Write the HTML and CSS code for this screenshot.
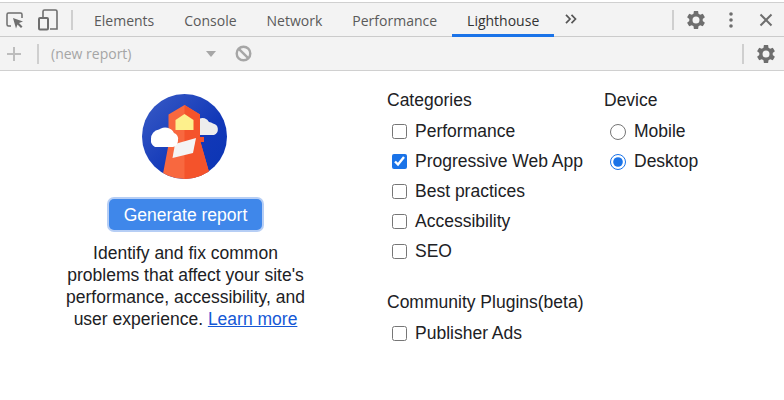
FILE: index.html
```html
<!DOCTYPE html>
<html lang="en">
<head>
    <meta charset="UTF-8">
    <title>Lighthouse - DevTools</title>
    <link rel="stylesheet" href="styles.css">
</head>
<body>
    <div class="tabbar">
        <button class="tool-btn inspect-btn" aria-label="Inspect">
            <svg width="20" height="20" viewBox="0 0 20 20"><path d="M6 16H3.500a1.500 1.500 0 0 1-1.500-1.500V4.500A1.500 1.500 0 0 1 3.500 3h12A1.500 1.500 0 0 1 17 4.500V8" fill="none" stroke="#6e6e6e" stroke-width="1.500"/><path d="M8 8l10 3.500-4 1.500 3.500 3.500-1.500 1.500-3.500-3.500-1.500 4z" fill="#6e6e6e"/></svg>
        </button>
        <button class="tool-btn device-btn" aria-label="Device">
            <svg width="20" height="22" viewBox="0 0 20 22"><path d="M5 8V2.500A1.500 1.500 0 0 1 6.500 1h11A1.500 1.500 0 0 1 19 2.500V20h-7" fill="none" stroke="#6e6e6e" stroke-width="1.600"/><rect x="1" y="9" width="9" height="11.500" rx="1" fill="none" stroke="#6e6e6e" stroke-width="2"/></svg>
        </button>
        <span class="divider tab-divider"></span>
        <nav class="tabs">
            <a class="tab">Elements</a>
            <a class="tab">Console</a>
            <a class="tab">Network</a>
            <a class="tab">Performance</a>
            <a class="tab active">Lighthouse</a>
        </nav>
        <svg class="more-tabs" width="12" height="10" viewBox="0 0 12 10"><path d="M1 .8L5 5 1 9.200M6.500 .8L10.500 5l-4 4.200" fill="none" stroke="#555" stroke-width="1.700"/></svg>
        <span class="spacer"></span>
        <span class="divider"></span>
        <svg class="gear" width="24" height="24" viewBox="0 0 24 24"><use href="#gear-icon"/></svg>
        <svg class="dots" width="4" height="18" viewBox="0 0 4 18"><circle cx="2" cy="3" r="1.800"/><circle cx="2" cy="9" r="1.800"/><circle cx="2" cy="15" r="1.800"/></svg>
        <svg class="close" width="14" height="14" viewBox="0 0 14 14"><path d="M1.500 1.500l11 11M12.500 1.500l-11 11" stroke="#6e6e6e" stroke-width="2"/></svg>
    </div>
    <div class="toolbar">
        <svg class="plus" width="14" height="14" viewBox="0 0 14 14"><path d="M7 0v14M0 7h14" stroke="#bdbdbd" stroke-width="2"/></svg>
        <span class="divider"></span>
        <span class="report-name">(new report)</span>
        <span class="caret"></span>
        <svg class="block" width="17" height="17" viewBox="0 0 17 17"><circle cx="8.500" cy="8.500" r="6.800" fill="none" stroke="#a6a6a6" stroke-width="2.400"/><path d="M3.800 3.800l9.400 9.400" stroke="#a6a6a6" stroke-width="2.400"/></svg>
        <span class="spacer"></span>
        <span class="divider"></span>
        <svg class="gear" width="24" height="24" viewBox="0 0 24 24"><use href="#gear-icon"/></svg>
    </div>
    <main class="start">
        <section class="intro">
            <svg class="logo" width="85" height="85" viewBox="0 0 85 85">
                <defs>
                    <clipPath id="disc"><circle cx="42.500" cy="42.500" r="42.500"/></clipPath>
                    <linearGradient id="sky" x1="0" y1="0" x2="1" y2="1"><stop offset="0" stop-color="#3a5cc6"/><stop offset=".6" stop-color="#1238b8"/><stop offset="1" stop-color="#0a35b4"/></linearGradient>
                </defs>
                <circle cx="42.500" cy="42.500" r="42.500" fill="url(#sky)"/>
                <g clip-path="url(#disc)">
                    <path d="M57 25a7 7 0 0 1 10 3a6.500 6.500 0 0 1 4 1.500 6 6 0 0 1 1 11.500H57z" fill="#ededed"/>
                    <path d="M26.500 20.500L42.500 11 58 20.500V43h4v5h-3.500L69 85H20l7-37h-.5z" fill="#f8683f"/>
                    <path d="M42.500 11L58 20.500V43h4v5h-3.500L69 85H42.500z" fill="#f4532b"/>
                    <path d="M33.500 26L42.500 20l9 6v10h-18z" fill="#fdf08c"/>
                    <path d="M33 50l21-6-3 15-20.500 5z" fill="#f4f4f4"/>
                    <path d="M13 53a8 8 0 0 1-4-8 9 9 0 0 1 8-9.500 10 10 0 0 1 15 3.500 6 6 0 0 1 4 7 6.500 6.500 0 0 1-5 7z" fill="#fff"/>
                </g>
            </svg>
            <button class="generate">Generate report</button>
            <p class="help">Identify and fix common problems that affect your site's performance, accessibility, and user experience. <a href="#">Learn more</a></p>
        </section>
        <section class="options">
            <div class="col-categories">
                <h2 class="group-title">Categories</h2>
                <label class="row"><input type="checkbox">Performance</label>
                <label class="row"><input type="checkbox" checked>Progressive Web App</label>
                <label class="row"><input type="checkbox">Best practices</label>
                <label class="row"><input type="checkbox">Accessibility</label>
                <label class="row"><input type="checkbox">SEO</label>
                <h2 class="group-title plugins">Community Plugins(beta)</h2>
                <label class="row"><input type="checkbox">Publisher Ads</label>
            </div>
            <div class="col-device">
                <h2 class="group-title">Device</h2>
                <label class="row"><input type="radio" name="device">Mobile</label>
                <label class="row"><input type="radio" name="device" checked>Desktop</label>
            </div>
        </section>
    </main>
    <svg width="0" height="0" class="defs">
        <symbol id="gear-icon" viewBox="0.700 0 24 24"><path fill="#6e6e6e" d="M19.400 13a7.500 7.500 0 0 0 0-2l2.200-1.700-2.100-3.600-2.600 1a7.600 7.600 0 0 0-1.700-1L14.800 2.900h-4.200l-.4 2.800a7.600 7.600 0 0 0-1.700 1l-2.600-1-2.100 3.600L6 11a7.500 7.500 0 0 0 0 2l-2.200 1.700 2.100 3.600 2.600-1a7.600 7.600 0 0 0 1.700 1l.4 2.800h4.200l.4-2.800a7.600 7.600 0 0 0 1.700-1l2.600 1 2.100-3.600zM12.700 15.500a3.500 3.500 0 1 1 0-7 3.500 3.500 0 0 1 0 7z"/></symbol>
    </svg>
</body>
</html>
```
FILE: styles.css
```css
html, body {
    margin: 0;
    height: 100%;
    background: #fff;
    overflow: hidden;
}
body {
    font-family: "Liberation Sans", Arial, sans-serif;
    font-size: 17.5px;
    color: #202124;
    padding-top: 2px;
    box-sizing: border-box;
}
.defs {
    position: absolute;
}
button {
    font-family: inherit;
}
.tabbar, .toolbar {
    display: flex;
    align-items: center;
    background: #f3f3f3;
    box-sizing: border-box;
}
.tabbar {
    height: 35px;
    border-top: 1px solid #d0d0d0;
    border-bottom: 1px solid #cbcbcb;
}
.toolbar {
    height: 34px;
    border-bottom: 1px solid #d0d0d0;
}
.tool-btn {
    background: none;
    border: 0;
    padding: 0;
    display: flex;
}
.inspect-btn {
    margin-left: 5px;
}
.device-btn {
    margin-left: 13px;
}
.divider {
    width: 2px;
    height: 20px;
    background: #cfcfcf;
    flex: none;
}
.tab-divider {
    margin-left: 13px;
}
.tabs {
    display: flex;
    align-self: stretch;
    margin-left: 6px;
}
.tab {
    font-family: "Open Sans", sans-serif;
    font-size: 14px;
    color: #5a5a5a;
    padding: 0 15px;
    display: flex;
    align-items: center;
    box-sizing: border-box;
    margin-bottom: -1px;
}
.tab.active {
    color: #333;
    border-bottom: 3px solid #1a73e8;
    padding-top: 3px;
}
.more-tabs {
    margin: -2px 0 0 11px;
}
.spacer {
    flex: 1;
}
.gear {
    margin-left: 10px;
}
.dots {
    fill: #6e6e6e;
    margin-left: 21px;
}
.close {
    margin: 0 11px 0 26px;
}
.toolbar .plus {
    margin: 0 16px 0 7px;
}
.toolbar .gear {
    margin: 0 6px 0 10px;
}
.report-name {
    font-family: "Open Sans", sans-serif;
    font-size: 14px;
    color: #a5a5a5;
    margin-left: 12px;
    width: 155px;
}
.caret {
    width: 0;
    height: 0;
    border-left: 5px solid transparent;
    border-right: 5px solid transparent;
    border-top: 6px solid #a6a6a6;
}
.block {
    margin-left: 19px;
}
.start {
    display: flex;
}
.intro {
    width: 371px;
    box-sizing: border-box;
    display: flex;
    flex-direction: column;
    align-items: center;
    padding-top: 23px;
}
.logo {
    margin-right: 2px;
}
.generate {
    margin-top: 20px;
    width: 153px;
    height: 31px;
    background-color: #3f87ea;
    color: #fff;
    font-size: 17.5px;
    border: 0;
    border-radius: 5px;
    box-shadow: 0 0 0 2px #b6cef5;
    padding: 2px 0 0;
}
.help {
    margin: 12px 0 0;
    width: 246px;
    text-align: center;
    line-height: 22px;
}
.help a {
    color: #1558d6;
}
.options {
    display: flex;
    margin-left: 16px;
    padding-top: 18px;
}
.col-categories {
    width: 217px;
}
.group-title {
    font-size: 17.5px;
    font-weight: normal;
    margin: 0 0 5px;
    line-height: 22px;
}
.plugins {
    margin-top: 25px;
}
.row {
    display: flex;
    align-items: center;
    height: 30px;
    margin-left: 5px;
}
.row input {
    width: 15px;
    height: 15px;
    margin: 1px 8px 0 0;
    accent-color: #1a73e8;
}
.row input[type="radio"] {
    width: 16px;
    height: 16px;
    margin-left: 1px;
}
```
